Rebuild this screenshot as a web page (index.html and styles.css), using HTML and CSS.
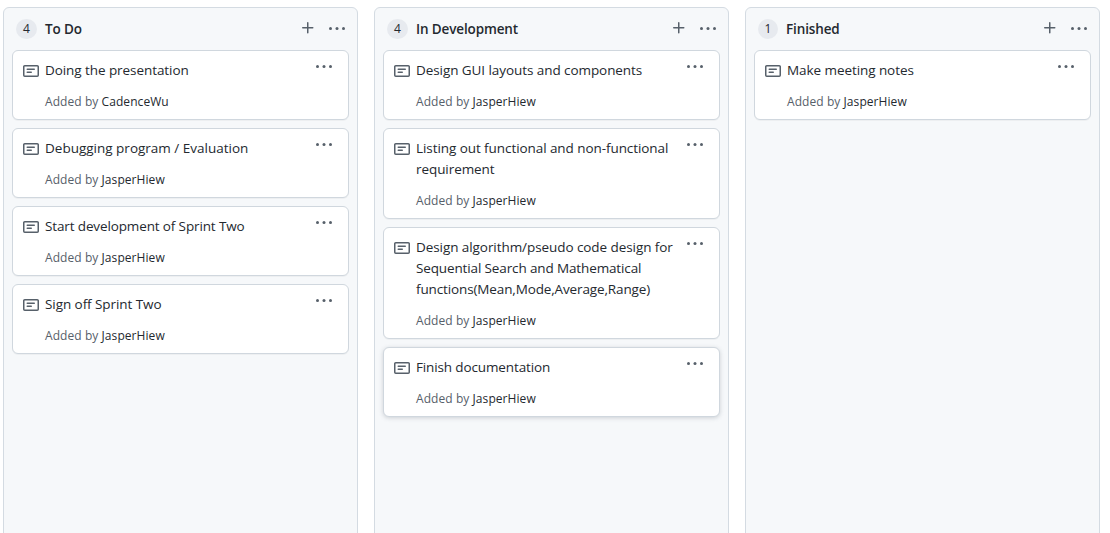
FILE: index.html
```html
<!DOCTYPE html>
<html lang="en">
<head>
<meta charset="utf-8">
<title>Project board</title>
<link rel="stylesheet" href="styles.css">
</head>
<body>
<svg class="sprite" aria-hidden="true">
  <symbol id="note" viewBox="0 0 16 16"><path fill-rule="evenodd" d="M0 3.75C0 2.784.784 2 1.75 2h12.5c.966 0 1.75.784 1.75 1.75v8.5A1.75 1.75 0 0114.25 14H1.75A1.75 1.75 0 010 12.25v-8.5zm1.75-.25a.25.25 0 00-.25.25v8.5c0 .138.112.25.25.25h12.5a.25.25 0 00.25-.25v-8.5a.25.25 0 00-.25-.25H1.75zM3.5 6.25a.75.75 0 01.75-.75h7a.75.75 0 010 1.5h-7a.75.75 0 01-.75-.75zm.75 2.25a.75.75 0 000 1.5h4a.75.75 0 000-1.5h-4z"/></symbol>
  <symbol id="dots" viewBox="0 0 16 16"><circle cx="1.5" cy="7.5" r="1.5"/><circle cx="8" cy="7.5" r="1.5"/><circle cx="14.5" cy="7.5" r="1.5"/></symbol>
  <symbol id="plus" viewBox="0 0 16 16"><path d="M7.75 2a.75.75 0 01.75.75V7h4.25a.75.75 0 110 1.5H8.5v4.25a.75.75 0 11-1.5 0V8.5H2.75a.75.75 0 010-1.5H7V2.75A.75.75 0 017.75 2z"/></symbol>
</svg>
<main class="board">
  <section class="column">
    <header class="column-header">
      <span class="counter">4</span><h3 class="column-title">To Do</h3>
      <svg class="icon add"><use href="#plus"/></svg><svg class="icon"><use href="#dots"/></svg>
    </header>
    <article class="card">
      <svg class="icon note"><use href="#note"/></svg>
      <div class="card-body"><p class="card-title">Doing the presentation</p><p class="meta">Added by <a class="author">CadenceWu</a></p></div>
      <svg class="icon"><use href="#dots"/></svg>
    </article>
    <article class="card">
      <svg class="icon note"><use href="#note"/></svg>
      <div class="card-body"><p class="card-title loose">Debugging program / Evaluation</p><p class="meta">Added by <a class="author">JasperHiew</a></p></div>
      <svg class="icon"><use href="#dots"/></svg>
    </article>
    <article class="card">
      <svg class="icon note"><use href="#note"/></svg>
      <div class="card-body"><p class="card-title tight">Start development of Sprint Two</p><p class="meta">Added by <a class="author">JasperHiew</a></p></div>
      <svg class="icon"><use href="#dots"/></svg>
    </article>
    <article class="card">
      <svg class="icon note"><use href="#note"/></svg>
      <div class="card-body"><p class="card-title">Sign off Sprint Two</p><p class="meta">Added by <a class="author">JasperHiew</a></p></div>
      <svg class="icon"><use href="#dots"/></svg>
    </article>
  </section>
  <section class="column">
    <header class="column-header">
      <span class="counter">4</span><h3 class="column-title">In Development</h3>
      <svg class="icon add"><use href="#plus"/></svg><svg class="icon"><use href="#dots"/></svg>
    </header>
    <article class="card">
      <svg class="icon note"><use href="#note"/></svg>
      <div class="card-body"><p class="card-title">Design GUI layouts and components</p><p class="meta">Added by <a class="author">JasperHiew</a></p></div>
      <svg class="icon"><use href="#dots"/></svg>
    </article>
    <article class="card">
      <svg class="icon note"><use href="#note"/></svg>
      <div class="card-body"><p class="card-title">Listing out functional and non-functional<br>requirement</p><p class="meta">Added by <a class="author">JasperHiew</a></p></div>
      <svg class="icon"><use href="#dots"/></svg>
    </article>
    <article class="card">
      <svg class="icon note"><use href="#note"/></svg>
      <div class="card-body"><p class="card-title">Design algorithm/pseudo code design for<br><span class="tight">Sequential Search and Mathematical<br>functions(Mean,Mode,Average,Range)</span></p><p class="meta">Added by <a class="author">JasperHiew</a></p></div>
      <svg class="icon"><use href="#dots"/></svg>
    </article>
    <article class="card raised">
      <svg class="icon note"><use href="#note"/></svg>
      <div class="card-body"><p class="card-title tight">Finish documentation</p><p class="meta">Added by <a class="author">JasperHiew</a></p></div>
      <svg class="icon"><use href="#dots"/></svg>
    </article>
  </section>
  <section class="column">
    <header class="column-header">
      <span class="counter narrow">1</span><h3 class="column-title">Finished</h3>
      <svg class="icon add"><use href="#plus"/></svg><svg class="icon"><use href="#dots"/></svg>
    </header>
    <article class="card">
      <svg class="icon note"><use href="#note"/></svg>
      <div class="card-body"><p class="card-title">Make meeting notes</p><p class="meta">Added by <a class="author">JasperHiew</a></p></div>
      <svg class="icon"><use href="#dots"/></svg>
    </article>
  </section>
</main>
</body>
</html>
```
FILE: styles.css
```css
* { box-sizing: border-box; }
body {
  margin: 0;
  background: #fff;
  color: #24292f;
  font-family: "Segoe UI", "Open Sans", "Noto Sans", sans-serif;
  font-size: 14px;
  line-height: 21px;
}
p, h3 { margin: 0; }
.sprite { display: none; }
.board {
  display: flex;
  gap: 16px;
  height: 533px;
  padding: 7px 0 0 3px;
  overflow: hidden;
}
.column {
  flex: none;
  width: 355px;
  height: 560px;
  padding: 0 8px;
  background: #f6f8fa;
  border: 1px solid #d4dbe2;
  border-radius: 6px;
}
.column-header {
  display: flex;
  align-items: flex-start;
  height: 42px;
  padding: 11px 4px 0 4px;
}
.counter {
  width: 21px;
  height: 20px;
  border-radius: 10px;
  background: #e7eaef;
  font-size: 12px;
  font-weight: 500;
  line-height: 20px;
  text-align: center;
}
.counter.narrow { width: 20px; }
.column-title {
  flex: 1;
  margin-left: 8px;
  font-size: 13.5px;
  font-weight: 600;
  letter-spacing: -0.13px;
  line-height: 21px;
}
.icon {
  flex: none;
  width: 16px;
  height: 16px;
  fill: #57606a;
}
.column-header .icon { margin-top: 2px; }
.column-header .add { margin: 1px 13px 0 0; }
.card {
  display: flex;
  margin-bottom: 8px;
  padding: 8px 16px 7px 10px;
  background: #fff;
  border: 1px solid #d0d7de;
  border-radius: 6px;
  box-shadow: 0 1px 0 rgba(27, 31, 36, 0.04);
}
.card.raised { box-shadow: 0 1px 4px rgba(106, 115, 125, 0.3); }
.note { margin: 4px 6px 0 0; }
.card-body {
  flex: 1;
  white-space: nowrap;
}
.card-title {
  padding-top: 1px;
  font-size: 13.5px;
  letter-spacing: -0.07px;
}
.tight { letter-spacing: -0.13px; }
.loose { letter-spacing: 0; }
.meta {
  margin-top: 10px;
  color: #57606a;
  font-size: 12px;
  letter-spacing: 0.07px;
}
.author { color: #24292f; }
```
